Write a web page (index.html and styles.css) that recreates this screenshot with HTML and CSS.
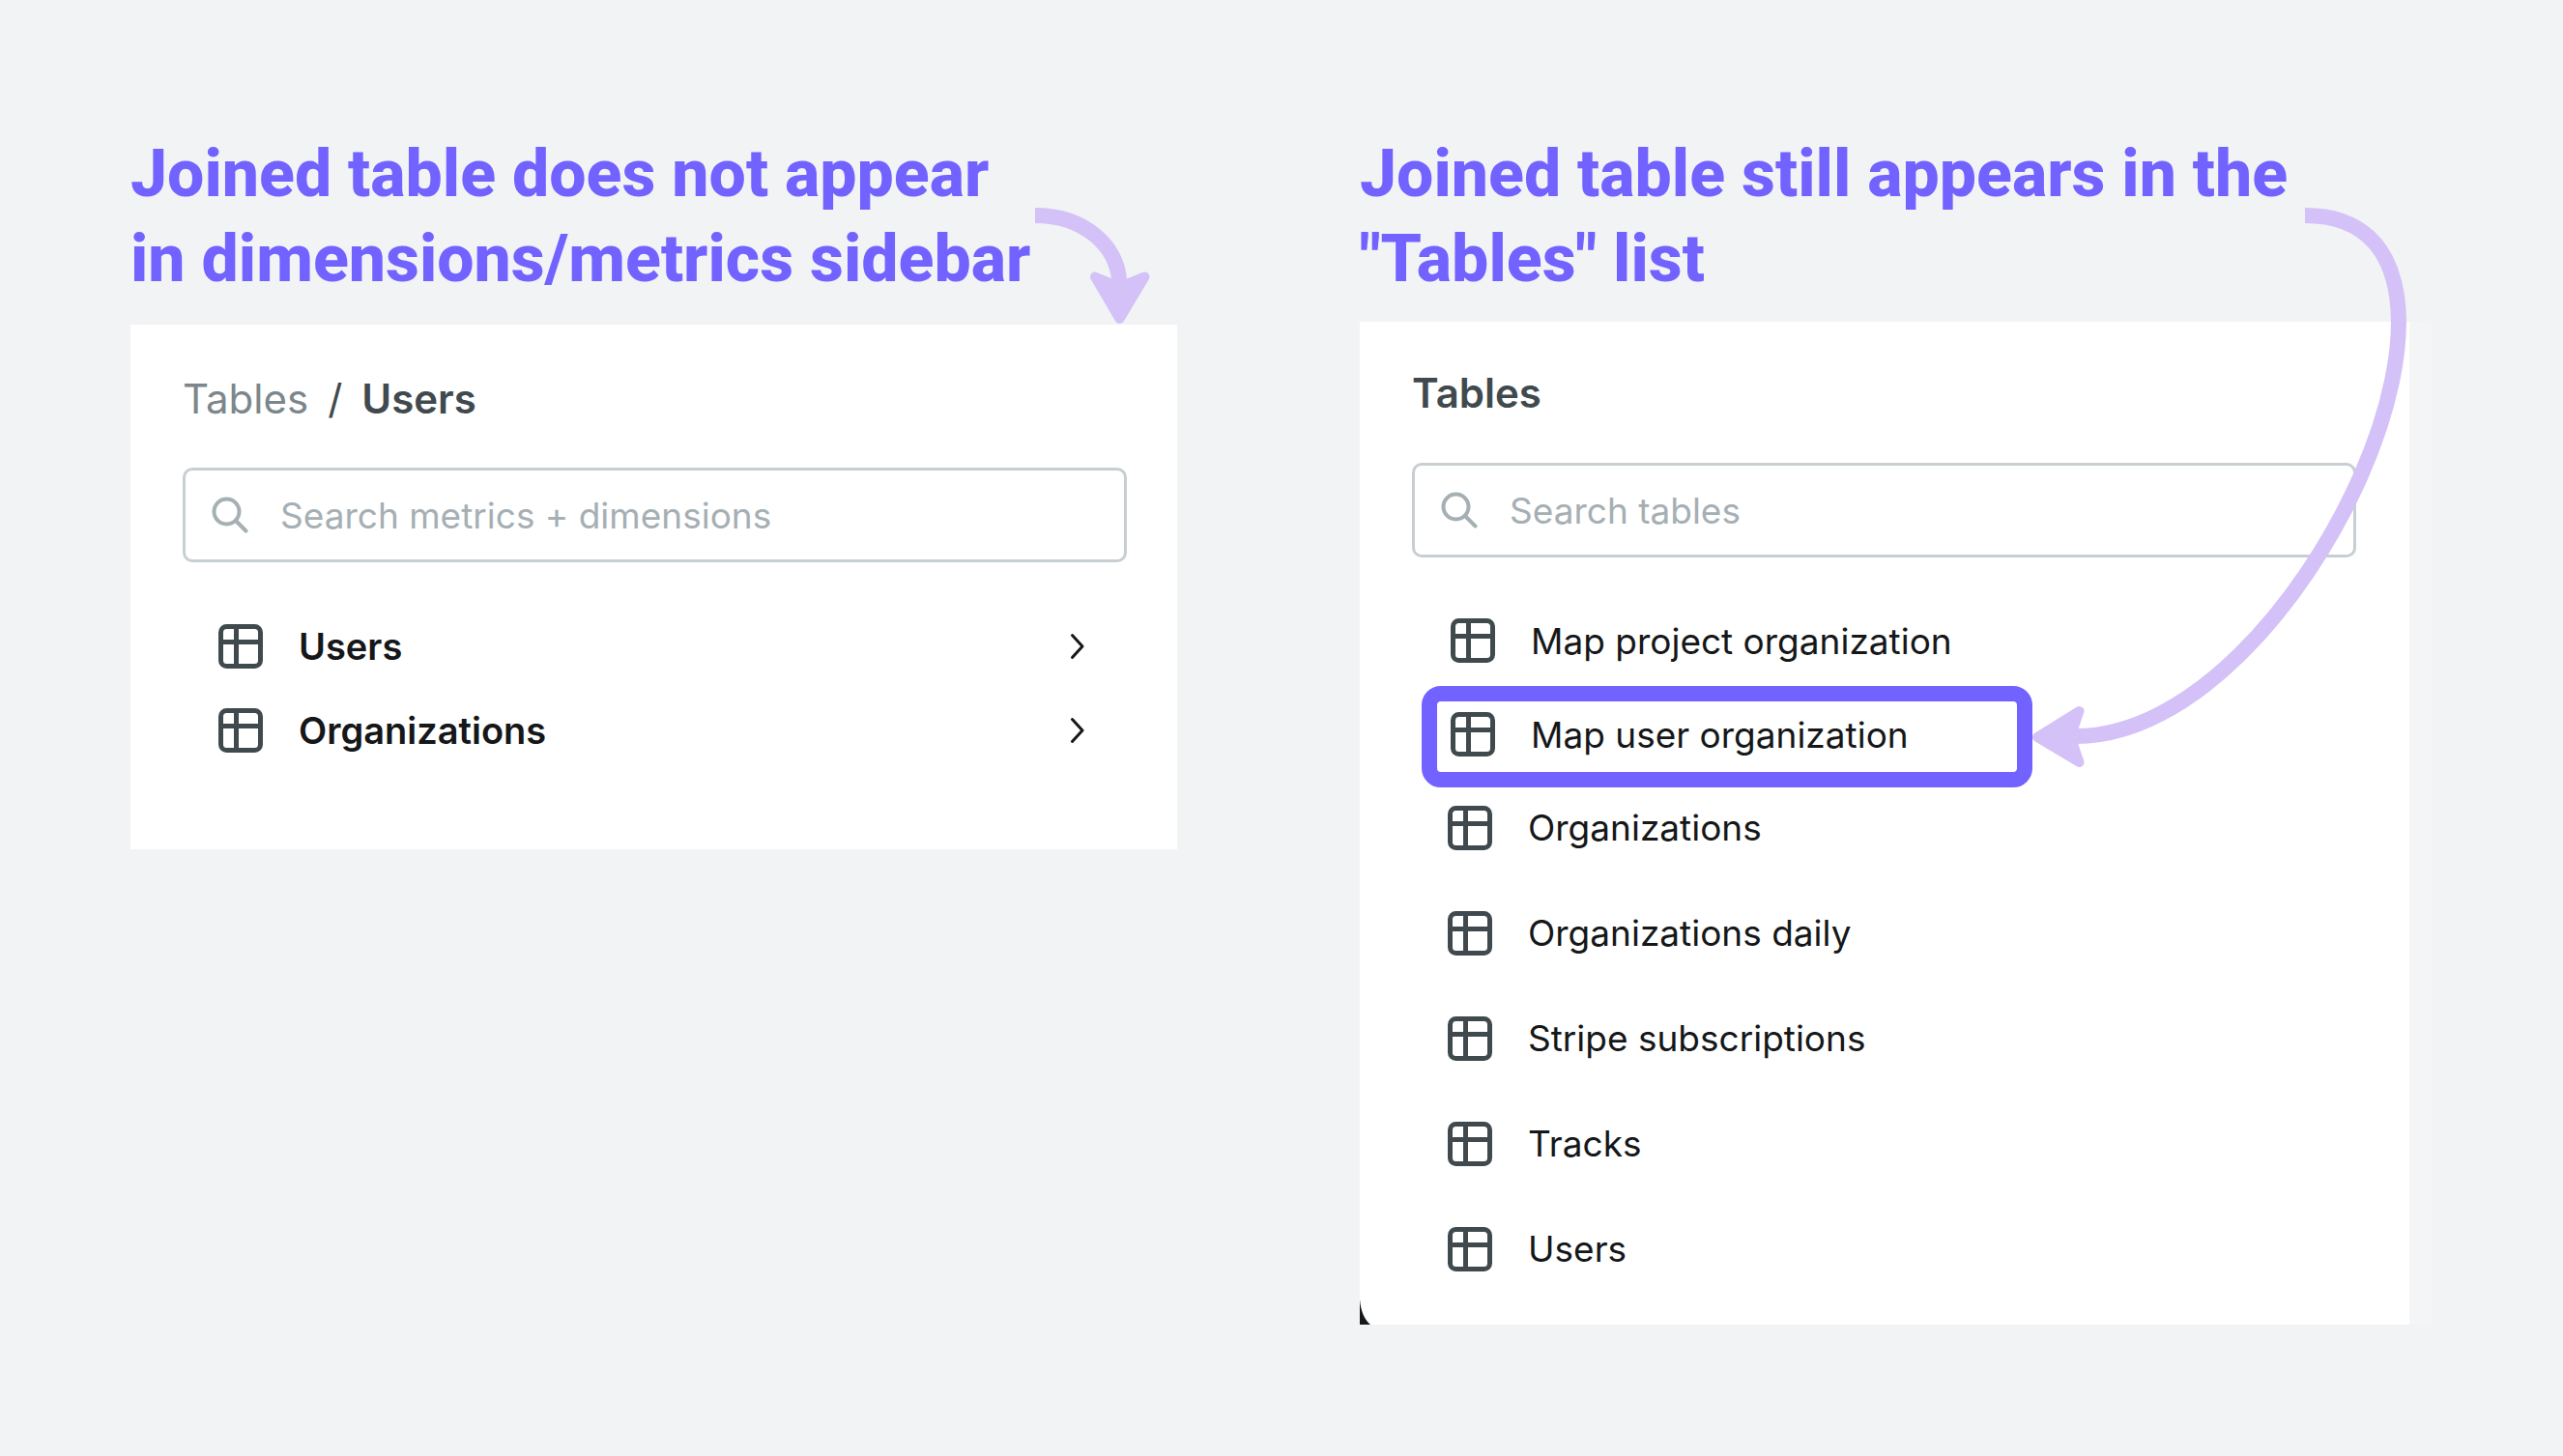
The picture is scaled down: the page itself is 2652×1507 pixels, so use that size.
FILE: index.html
```html
<!DOCTYPE html>
<html lang="en">
<head>
    <meta charset="UTF-8">
    <meta name="viewport" content="width=device-width, initial-scale=1.0">
    <title>Joined tables in the sidebar</title>
    <link rel="stylesheet" href="styles.css">
</head>
<body>
    <!-- Shared icons -->
    <svg class="sprite" aria-hidden="true">
        <symbol id="icon-table" viewBox="0 0 46 46">
            <rect x="2.5" y="2.5" width="41" height="41" rx="6"/>
            <path d="M18.5 2.5v41M2.5 18.5h41"/>
        </symbol>
        <symbol id="icon-search" viewBox="0 0 38 38">
            <circle cx="15.5" cy="15.5" r="13"/>
            <path d="M25 25l10.500 10.500"/>
        </symbol>
        <symbol id="icon-chevron" viewBox="0 0 16 30">
            <path d="M2.500 3.500L13 15 2.500 26.500"/>
        </symbol>
    </svg>

    <main class="board">
        <section class="column">
            <h2 class="caption">Joined table does not appear<br>in dimensions/metrics sidebar</h2>
            <div class="panel">
                <nav class="breadcrumb">
                    <a href="#tables">Tables</a>
                    <span class="slash">/</span>
                    <strong>Users</strong>
                </nav>
                <div class="search">
                    <svg class="search-icon" aria-hidden="true"><use href="#icon-search"/></svg>
                    <input type="text" id="searchFields" aria-label="Search metrics and dimensions" placeholder="Search metrics + dimensions">
                </div>
                <div class="tree">
                    <button type="button" class="tree-row">
                        <svg class="table-icon" aria-hidden="true"><use href="#icon-table"/></svg>
                        <span class="row-name">Users</span>
                        <svg class="chevron" aria-hidden="true"><use href="#icon-chevron"/></svg>
                    </button>
                    <button type="button" class="tree-row">
                        <svg class="table-icon" aria-hidden="true"><use href="#icon-table"/></svg>
                        <span class="row-name">Organizations</span>
                        <svg class="chevron" aria-hidden="true"><use href="#icon-chevron"/></svg>
                    </button>
                </div>
            </div>
            <svg class="arrow arrow-short" viewBox="1065 210 130 130" aria-hidden="true">
                <path class="arrow-line" d="M1071 223C1120 223 1158 253 1158.500 296"/>
                <path class="arrow-head" d="M1133 286.500L1158.500 297 1184.500 286.500 1158.500 330Z"/>
            </svg>
        </section>

        <section class="column">
            <h2 class="caption caption-tight">Joined table still appears in the<br>"Tables" list</h2>
            <div class="panel panel-edge">
                <h3 class="panel-title">Tables</h3>
                <div class="search">
                    <svg class="search-icon" aria-hidden="true"><use href="#icon-search"/></svg>
                    <input type="text" id="searchTables" aria-label="Search tables" placeholder="Search tables">
                </div>
                <ul class="table-list joined">
                    <li><a href="#map-project"><svg class="table-icon" aria-hidden="true"><use href="#icon-table"/></svg>Map project organization</a></li>
                    <li class="highlight"><a href="#map-user"><svg class="table-icon" aria-hidden="true"><use href="#icon-table"/></svg>Map user organization</a></li>
                </ul>
                <ul class="table-list">
                    <li><a href="#organizations"><svg class="table-icon" aria-hidden="true"><use href="#icon-table"/></svg>Organizations</a></li>
                    <li><a href="#organizations-daily"><svg class="table-icon" aria-hidden="true"><use href="#icon-table"/></svg>Organizations daily</a></li>
                    <li><a href="#stripe"><svg class="table-icon" aria-hidden="true"><use href="#icon-table"/></svg>Stripe subscriptions</a></li>
                    <li><a href="#tracks"><svg class="table-icon" aria-hidden="true"><use href="#icon-table"/></svg>Tracks</a></li>
                    <li><a href="#users"><svg class="table-icon" aria-hidden="true"><use href="#icon-table"/></svg>Users</a></li>
                </ul>
                <svg class="corner" viewBox="0 0 11 26" aria-hidden="true"><path d="M0 0C1 12 5 21 11 26H0Z"/></svg>
            </div>
            <svg class="arrow arrow-long" viewBox="2095 210 400 600" aria-hidden="true">
                <path class="arrow-line" d="M2385 223C2620 223 2383 762 2148 762"/>
                <path class="arrow-head" d="M2108 763L2151.500 736 2142.500 762.500 2151.500 789Z"/>
            </svg>
        </section>
    </main>
</body>
</html>
```
FILE: styles.css
```css
/* Global Styles */
*,
*::before {
    box-sizing: border-box;
}
body {
    margin: 0;
    background-color: #f1f3f5;
    color: #151719;
    font-family: Inter, "Liberation Sans", sans-serif;
    font-size: 37px;
}
.sprite {
    display: none;
}
svg {
    fill: none;
    stroke-linecap: round;
    stroke-linejoin: round;
}
/* Layout */
.board {
    display: grid;
    grid-template-columns: 1083fr 1109fr;
    gap: 189px;
    align-items: start;
    padding: 136px 136px 136px 135px;
}
.column {
    position: relative;
}
.caption {
    margin: 0 0 24px;
    color: #7262ff;
    font-family: Roboto, sans-serif;
    font-size: 68px;
    font-weight: 800;
    line-height: 88px;
    white-space: nowrap;
}
.caption-tight {
    margin-bottom: 21px;
}
/* Panels */
.panel {
    position: relative;
    padding: 46px 52px 80px 54px;
    background-color: #fff;
}
.panel-edge {
    padding: 44px 55px 24px 54px;
    border-right: 23px solid #f4f5f7;
}
.breadcrumb {
    display: flex;
    gap: 20px;
    height: 60px;
    align-items: center;
    font-size: 42px;
    color: #404a4e;
}
.breadcrumb a {
    color: #7c868b;
    text-decoration: none;
}
.breadcrumb strong,
.panel-title {
    font-weight: 600;
}
.panel-title {
    margin: 0;
    font-size: 42px;
    line-height: 60px;
    color: #404a4e;
}
/* Search box */
.search {
    display: flex;
    align-items: center;
    gap: 33px;
    height: 98px;
    margin-top: 42px;
    padding: 0 27px;
    border: 3px solid #c8cfd2;
    border-radius: 10px;
}
.search-icon {
    width: 38px;
    height: 38px;
    flex: none;
    stroke: #a5afb4;
    stroke-width: 4px;
}
.search input {
    flex: 1;
    min-width: 0;
    padding: 0;
    border: 0;
    outline: 0;
    background: none;
    color: inherit;
    font: inherit;
}
.search input::placeholder {
    color: #a5afb4;
    opacity: 1;
}
/* Rows */
.table-icon {
    width: 46px;
    height: 46px;
    flex: none;
    stroke: #404a4e;
    stroke-width: 5px;
}
.tree {
    margin-top: 43px;
}
.tree-row {
    display: flex;
    align-items: center;
    gap: 37px;
    width: 100%;
    height: 87px;
    padding: 0 43px 0 37px;
    border: 0;
    background: none;
    color: inherit;
    font: inherit;
    font-size: 38px;
    font-weight: 600;
    text-align: left;
    cursor: pointer;
}
.row-name {
    flex: 1;
}
.chevron {
    width: 16px;
    height: 30px;
    stroke: #151719;
    stroke-width: 3px;
}
.table-list {
    margin: 0;
    padding: 0 0 0 37px;
    list-style: none;
}
.table-list a {
    display: flex;
    align-items: center;
    gap: 37px;
    height: 109px;
    color: inherit;
    text-decoration: none;
}
.table-list.joined {
    display: grid;
    gap: 13px;
    margin-top: 44px;
    padding-left: 40px;
}
.joined a {
    height: 84px;
}
/* Annotations */
.highlight {
    position: relative;
}
.highlight::before {
    content: "";
    position: absolute;
    top: -8px;
    left: -30px;
    width: 632px;
    height: 105px;
    border: 16px solid #7262ff;
    border-radius: 20px;
}
.arrow {
    position: absolute;
}
.arrow-short {
    top: 74px;
    right: 23px;
    width: 130px;
    height: 130px;
}
.arrow-long {
    top: 74px;
    right: 21px;
    width: 400px;
    height: 600px;
    pointer-events: none;
}
.arrow-line {
    stroke: #d4c1f7;
    stroke-width: 16px;
    stroke-linecap: butt;
}
.arrow-head {
    fill: #d4c1f7;
    stroke: #d4c1f7;
    stroke-width: 10px;
}
.corner {
    position: absolute;
    left: 0;
    bottom: 0;
    width: 11px;
    height: 26px;
    fill: #151719;
}
```
